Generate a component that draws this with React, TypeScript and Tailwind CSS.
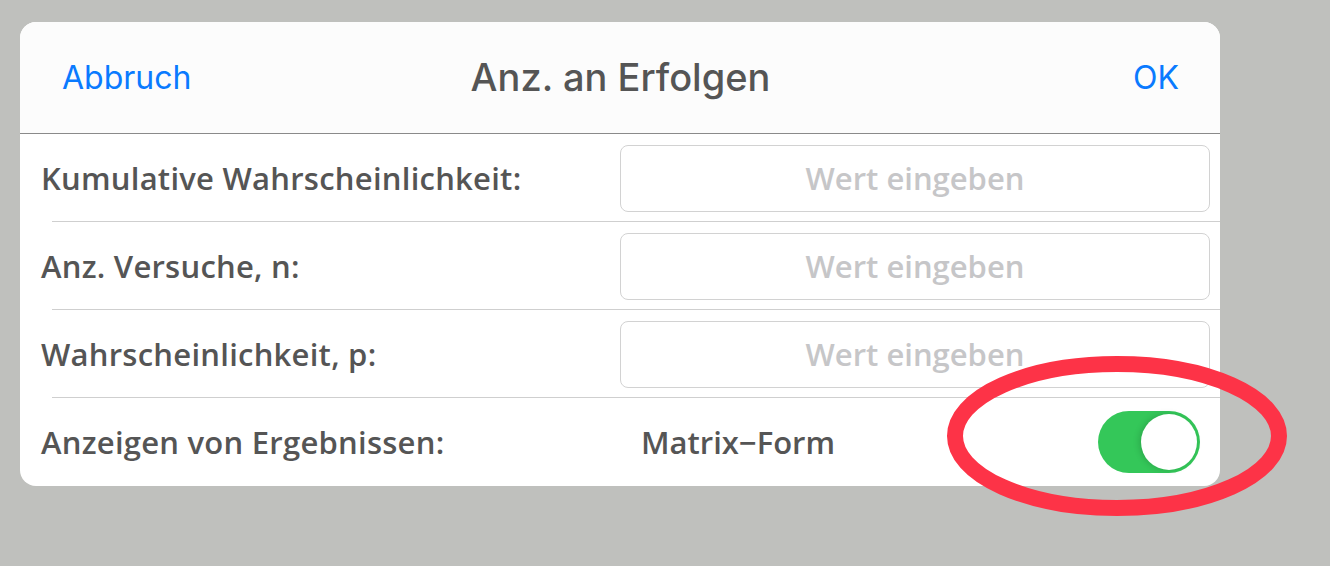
import React from "react";

const labelFont = { fontFamily: "'Open Sans', 'Noto Sans', sans-serif" };
const sysFont = { fontFamily: "Inter, Roboto, sans-serif" };

function InputRow({ label, last }: { label: string; last?: boolean }) {
  return (
    <div className="relative flex h-[88px] items-center">
      <div className="w-[600px] pl-[21px] text-[31px] font-semibold tracking-[0.25px] text-[#555555]" style={labelFont}>
        {label}
      </div>
      <div className="flex h-[67px] w-[590px] items-center justify-center rounded-[8px] border border-[#d2d2d2] bg-white">
        <span className="text-[31px] font-semibold text-[#c6c6c8]" style={labelFont}>Wert eingeben</span>
      </div>
      {!last && <div className="absolute bottom-0 left-[32px] right-0 h-px bg-[#cfcfcf]" />}
    </div>
  );
}

export default function App() {
  return (
    <div className="relative h-[566px] w-[1330px] overflow-hidden bg-[#bfc0bd]">
      <div className="ml-[20px] mt-[22px] w-[1200px] overflow-hidden rounded-[16px] bg-white">
        <div className="grid h-[112px] grid-cols-[1fr_auto_1fr] items-center border-b border-[#8a8a8a] bg-[#fcfcfc] pl-[42px] pr-[41px]" style={sysFont}>
          <span className="justify-self-start text-[32px] text-[#0a7aff]">Abbruch</span>
          <span className="text-[38px] font-medium text-[#555555]">Anz. an Erfolgen</span>
          <span className="justify-self-end text-[32px] text-[#0a7aff]">OK</span>
        </div>
        <InputRow label="Kumulative Wahrscheinlichkeit:" />
        <InputRow label="Anz. Versuche, n:" />
        <InputRow label="Wahrscheinlichkeit, p:" />
        <div className="flex h-[88px] items-center">
          <div className="w-[600px] pl-[21px] text-[31px] font-semibold tracking-[0.25px] text-[#555555]" style={labelFont}>
            Anzeigen von Ergebnissen:
          </div>
          <div className="flex-1 pl-[21px] text-[31px] font-semibold text-[#555555]" style={labelFont}>
            Matrix−Form
          </div>
          <div className="mr-[20px] flex h-[62px] w-[102px] items-center justify-end rounded-full bg-[#34c759] p-[3px]">
            <div className="h-[56px] w-[56px] rounded-full bg-white shadow-[-2px_0_6px_rgba(0,0,0,0.15)]" />
          </div>
        </div>
      </div>
      <svg className="absolute left-0 top-0" width="1330" height="566">
        <ellipse cx="1117" cy="436" rx="162" ry="72" fill="none" stroke="#fd3347" strokeWidth="16" />
      </svg>
    </div>
  );
}
